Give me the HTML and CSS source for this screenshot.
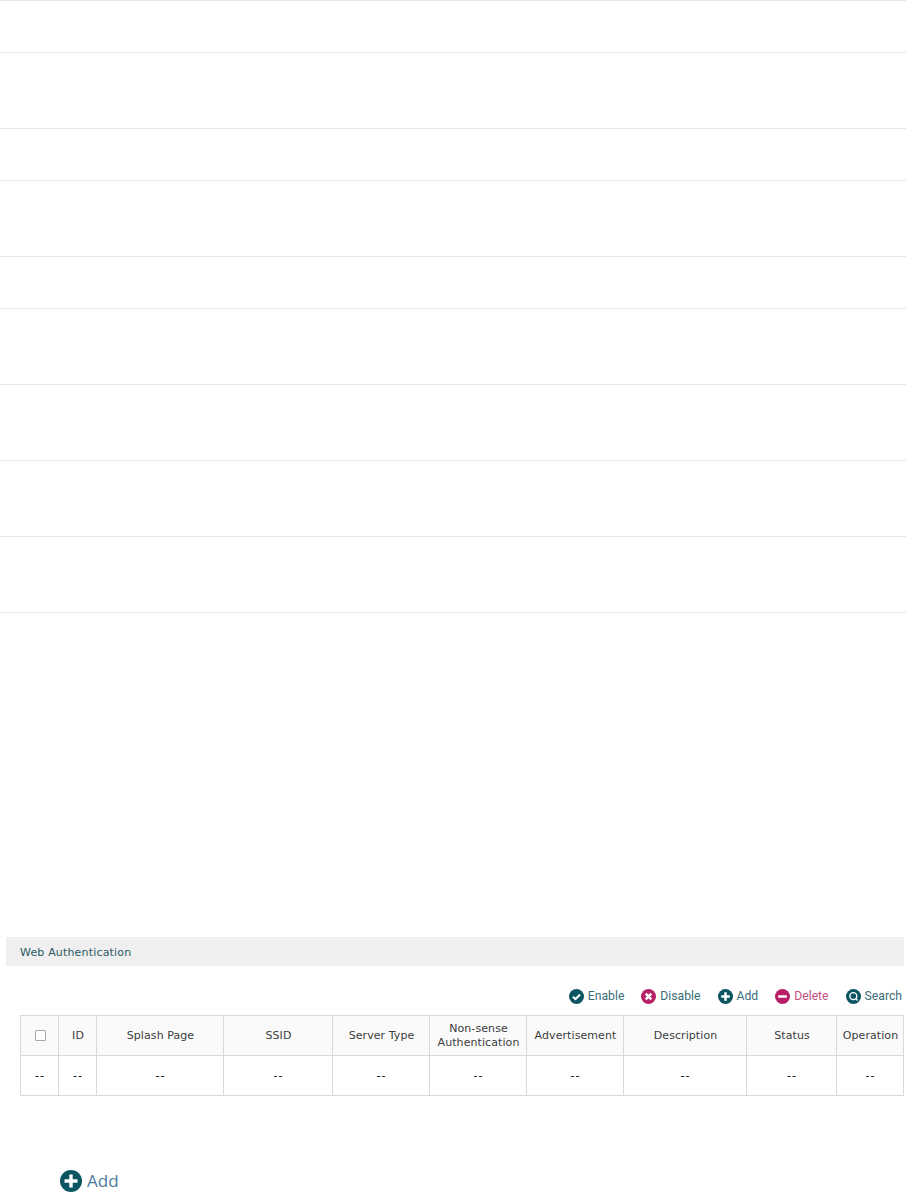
FILE: index.html
```html
<!DOCTYPE html>
<html lang="en">
<head>
<meta charset="utf-8">
<title>Web Authentication</title>
<link rel="stylesheet" href="styles.css">
</head>
<body>
<div class="rules">
  <div class="rule short"></div>
  <div class="rule tall"></div>
  <div class="rule short"></div>
  <div class="rule tall"></div>
  <div class="rule short"></div>
  <div class="rule tall"></div>
  <div class="rule tall"></div>
  <div class="rule tall"></div>
  <div class="rule tall"></div>
</div>
<section class="panel">
  <h2 class="panel-title">Web Authentication</h2>
  <div class="toolbar">
    <span class="tool"><svg class="ic" viewBox="0 0 16 16"><circle cx="8" cy="8" r="8" fill="#0b5563"/><path d="M4.2 8.2l2.7 2.6 4.9-5" fill="none" stroke="#fff" stroke-width="2.2"/></svg>Enable</span>
    <span class="tool"><svg class="ic" viewBox="0 0 16 16"><circle cx="8" cy="8" r="8" fill="#b81f66"/><path d="M5 5l6 6M11 5l-6 6" fill="none" stroke="#fff" stroke-width="2.8"/></svg>Disable</span>
    <span class="tool"><svg class="ic" viewBox="0 0 16 16"><circle cx="8" cy="8" r="8" fill="#0b5563"/><path d="M8 3.4v9.2M3.4 8h9.2" fill="none" stroke="#fff" stroke-width="2.6"/></svg>Add</span>
    <span class="tool danger"><svg class="ic" viewBox="0 0 16 16"><circle cx="8" cy="8" r="8" fill="#b81f66"/><path d="M3.4 8h9.2" fill="none" stroke="#fff" stroke-width="2.6"/></svg>Delete</span>
    <span class="tool"><svg class="ic" viewBox="0 0 16 16"><circle cx="8" cy="8" r="8" fill="#0b5563"/><circle cx="7.8" cy="7.6" r="3.7" fill="none" stroke="#fff" stroke-width="1.5"/><path d="M10.4 10.2l2 2" stroke="#fff" stroke-width="1.6"/></svg>Search</span>
  </div>
  <table class="grid">
    <colgroup>
      <col class="c38"><col class="c38"><col class="c127"><col class="c109"><col class="c97"><col class="c97"><col class="c97"><col class="c123"><col class="c90"><col class="c67">
    </colgroup>
    <thead>
      <tr>
        <th><span class="check"></span></th>
        <th>ID</th>
        <th>Splash Page</th>
        <th>SSID</th>
        <th>Server Type</th>
        <th>Non-sense<br>Authentication</th>
        <th>Advertisement</th>
        <th>Description</th>
        <th>Status</th>
        <th>Operation</th>
      </tr>
    </thead>
    <tbody>
      <tr>
        <td>--</td><td>--</td><td>--</td><td>--</td><td>--</td><td>--</td><td>--</td><td>--</td><td>--</td><td>--</td>
      </tr>
    </tbody>
  </table>
</section>
<div class="big-add"><svg class="ic-big" viewBox="0 0 22 22"><circle cx="11" cy="11" r="11" fill="#0b5563"/><path d="M11 4.5v13M4.5 11h13" fill="none" stroke="#fff" stroke-width="3.4"/></svg>Add</div>
</body>
</html>
```
FILE: styles.css
```css
html, body {
  margin: 0;
  padding: 0;
  background: #fff;
}
body {
  width: 908px;
  height: 1197px;
  overflow: hidden;
  font-family: "DejaVu Sans", sans-serif;
  font-size: 11px;
}
.rules {
  width: 906px;
  border-top: 1px solid #e3e9f1;
}
.rule {
  border-bottom: 1px solid #e3e9f1;
  box-sizing: border-box;
}
.rule.short { height: 52px; }
.rule.tall { height: 76px; }
.rules .rule:first-child { height: 52px; }
.panel {
  margin: 324px 0 0 6px;
  width: 898px;
}
.panel-title {
  margin: 0;
  height: 29px;
  padding-left: 14px;
  background: #efefef;
  color: #2c5a5f;
  font-size: 11px;
  font-weight: normal;
  line-height: 31px;
  letter-spacing: 0.17px;
}
.toolbar {
  box-sizing: border-box;
  display: flex;
  justify-content: flex-end;
  align-items: center;
  gap: 17px;
  height: 49px;
  padding: 11px 2px 0 0;
  color: #3a6d78;
  font-family: "Roboto", sans-serif;
  font-size: 12.2px;
}
.tool {
  display: inline-flex;
  align-items: center;
  gap: 4px;
}
.tool.danger { color: #c4517f; }
.ic { width: 15px; height: 15px; }
.grid {
  margin-left: 14px;
  width: 884px;
  table-layout: fixed;
  border-collapse: collapse;
  color: #333;
}
.c38 { width: 38px; }
.c127 { width: 127px; }
.c109 { width: 109px; }
.c97 { width: 97px; }
.c123 { width: 123px; }
.c90 { width: 90px; }
.c67 { width: 67px; }
.grid th, .grid td {
  height: 39px;
  padding: 0 0 0 1px;
  border: 1px solid #d9d9d9;
  text-align: center;
  vertical-align: middle;
  font-weight: normal;
  line-height: 14px;
  white-space: nowrap;
}
.grid th { background: #fafafa; color: #3c3c3c; letter-spacing: 0.08px; }
.grid td { color: #000; letter-spacing: 1px; }
.check {
  display: inline-block;
  width: 9px;
  height: 9px;
  border: 1px solid #a8a8a8;
  border-radius: 1px;
  background: #fff;
  vertical-align: middle;
}
.big-add {
  display: flex;
  align-items: center;
  gap: 5px;
  margin: 74px 0 0 60px;
  color: #4c7a9e;
  font-family: "Open Sans", sans-serif;
  font-size: 17px;
  line-height: 22px;
}
.ic-big { width: 22px; height: 22px; }
```
